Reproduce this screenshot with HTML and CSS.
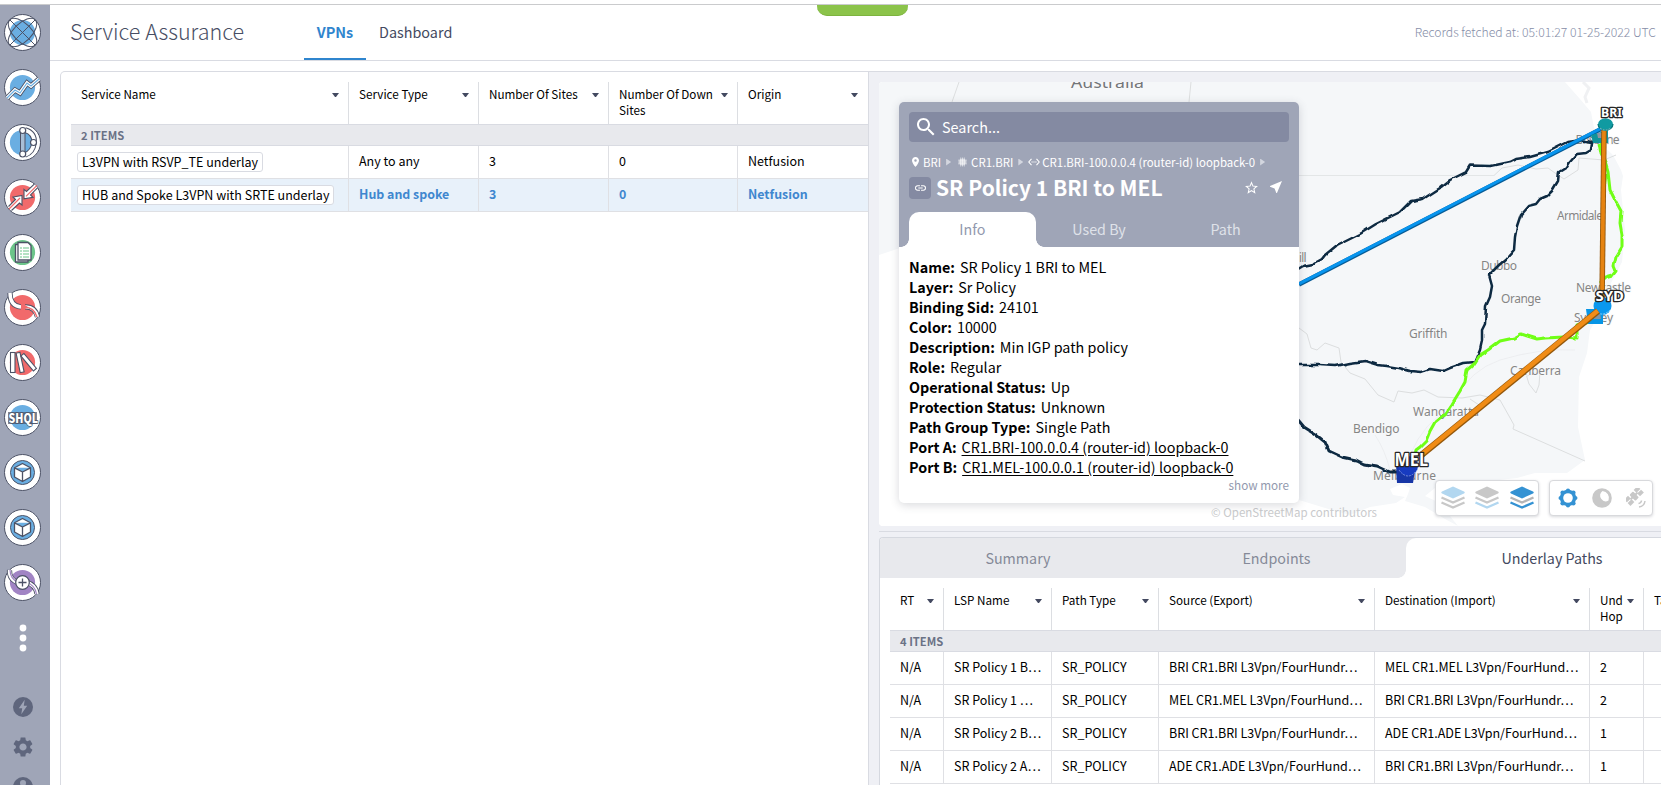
FILE: index.html
```html
<!DOCTYPE html>
<html lang="en">
<head>
<meta charset="utf-8">
<title>Service Assurance</title>
<link rel="stylesheet" href="styles.css">
</head>
<body>
<div class="app">
  <nav class="sidebar">
    <svg class="app-icon" viewBox="0 0 37 37"><circle class="disc" cx="18.5" cy="18.5" r="18"/><circle cx="18.5" cy="18.5" r="12.6" fill="#6aaee2"/><g class="ln"><ellipse cx="18.5" cy="18.5" rx="18" ry="9" transform="rotate(45 18.5 18.5)"/><ellipse cx="18.5" cy="18.5" rx="18" ry="9" transform="rotate(-45 18.5 18.5)"/><path d="M6 6L31 31M31 6L6 31"/></g></svg>
    <svg class="app-icon" viewBox="0 0 37 37"><circle class="disc" cx="18.5" cy="18.5" r="18"/><circle cx="18.5" cy="18.5" r="12.6" fill="#6aaee2"/><path class="tube-o" d="M3 29L11 21 16 24 23 14 27 17 35 10"/><path class="tube-w" d="M3 29L11 21 16 24 23 14 27 17 35 10"/><path d="M3 29L11 21 16 24 23 14 27 17 35 10" fill="none" stroke="#6aaee2" stroke-width="1.2"/></svg>
    <svg class="app-icon" viewBox="0 0 37 37"><circle class="disc" cx="18.5" cy="18.5" r="18"/><circle cx="18.5" cy="18.5" r="12.6" fill="#6aaee2"/><path d="M21 6Q31 9 30 19 29 28 21 31" fill="none" stroke="#4c5266" stroke-width="5.5"/><path d="M21 6Q31 9 30 19 29 28 21 31" fill="none" stroke="#fff" stroke-width="3.5"/><rect x="16.5" y="8" width="4.5" height="21" fill="#a9bfd6" stroke="#4c5266"/><g fill="#fff" stroke="#4c5266" stroke-width="1.2"><circle cx="18.7" cy="6.5" r="3"/><circle cx="29.5" cy="18.5" r="3"/><circle cx="18.7" cy="30" r="3"/></g></svg>
    <svg class="app-icon" viewBox="0 0 37 37"><circle class="disc" cx="18.5" cy="18.5" r="18"/><circle cx="18.5" cy="18.5" r="12.6" fill="#f16a6b"/><g id="arr"><path d="M4.5 27.5L11.5 20.5 9 18 18 16.5V26L15.5 24 7.5 31.5" fill="#fff" stroke="#4c5266" stroke-width="1.1"/><path d="M5 30L16 19" stroke="#f16a6b" stroke-width="1.3"/></g><use href="#arr" transform="rotate(180 19 18.2)"/></svg>
    <svg class="app-icon" viewBox="0 0 37 37"><circle class="disc" cx="18.5" cy="18.5" r="18"/><circle cx="18.5" cy="18.5" r="12.6" fill="#6cc58a"/><path d="M11.5 10.5H24V28H11.5Z" fill="#fff" stroke="#4c5266" stroke-width="1.3"/><path d="M14 8.5H24L27 11.5V26H14Z" fill="#fff" stroke="#4c5266" stroke-width="1.3"/><path d="M16 14h2m1 0h6M16 17h2m1 0h6M16 20h2m1 0h6M16 23h2m1 0h6" stroke="#6cc58a" stroke-width="1.2"/></svg>
    <svg class="app-icon" viewBox="0 0 37 37"><circle class="disc" cx="18.5" cy="18.5" r="18"/><circle cx="18.5" cy="18.5" r="12.6" fill="#f16a6b"/><path d="M6 4Q6 17 17 18" class="tube-o"/><path d="M6 4Q6 17 17 18" class="tube-w"/><path d="M20 18Q31 17 33.5 28" class="tube-o"/><path d="M20 18Q31 17 33.5 28" class="tube-w"/><path d="M20 18.3Q30 18 33 28" fill="none" stroke="#f16a6b" stroke-width="1.4"/><path d="M17 13l2 2 2-2v3l3 2-3 2v3l-2-2-2 1z" fill="#f16a6b"/></svg>
    <svg class="app-icon" viewBox="0 0 37 37"><circle class="disc" cx="18.5" cy="18.5" r="18"/><circle cx="18.5" cy="18.5" r="12.6" fill="#f16a6b"/><g fill="#fff" stroke="#4c5266" stroke-width="1.1"><rect x="6.5" y="8.5" width="4.5" height="20"/><rect x="14" y="8.5" width="4" height="20" transform="rotate(-12 16 18)"/><rect x="22.5" y="8.5" width="4" height="19.5" transform="rotate(-40 24.5 18)"/></g></svg>
    <svg class="app-icon" viewBox="0 0 37 37"><circle class="disc" cx="18.5" cy="18.5" r="18"/><circle cx="18.5" cy="18.5" r="12.6" fill="#6aaee2"/><path d="M4 13H33V25H4Z" fill="#4c5266" opacity=".7"/><text class="shql" x="4.5" y="23.5" textLength="29.5" lengthAdjust="spacingAndGlyphs">SHQL</text></svg>
    <svg class="app-icon" viewBox="0 0 37 37"><g id="cube"><circle class="disc" cx="18.5" cy="18.5" r="18"/><circle cx="18.5" cy="18.5" r="12" fill="#6aaee2" stroke="#4c5266"/><path d="M18.5 9.5L26.5 13.8V23L18.5 27.5 10.5 23V13.8ZM10.5 13.8L18.5 18 26.5 13.8M18.5 18V27.5" fill="#fff" stroke="#4c5266" stroke-width="1.3" stroke-linejoin="round"/></g></svg>
    <svg class="app-icon" viewBox="0 0 37 37"><use href="#cube"/></svg>
    <svg class="app-icon" viewBox="0 0 37 37"><circle class="disc" cx="18.5" cy="18.5" r="18"/><circle cx="18.5" cy="18.5" r="12.6" fill="#a184c4"/><path class="tube-o" d="M5.5 6Q5 16 15 19M22 18Q32 21 33 30"/><path class="tube-w" d="M5.5 6Q5 16 15 19M22 18Q32 21 33 30"/><path d="M6 6Q6 15 15 19M22 18Q31 21 32.5 30" fill="none" stroke="#a184c4" stroke-width="1.2"/><circle cx="18.5" cy="18.5" r="6.8" fill="#fff" stroke="#4c5266" stroke-width="1.2"/><path d="M18.5 14.5V22.5M14.5 18.5H22.5" stroke="#4c5266" stroke-width="1.3"/></svg>
    <svg class="dots" viewBox="0 0 8 28"><circle cx="4" cy="4" r="3.4"/><circle cx="4" cy="14" r="3.4"/><circle cx="4" cy="24" r="3.4"/></svg>
    <svg class="tool first" viewBox="0 0 20 20"><circle cx="10" cy="10" r="10"/><path d="M11.7 2.8L5.8 11.2H9.2L8.3 17.2 14.2 8.8H10.8Z" fill="#9fa5b7"/></svg>
    <svg class="tool" viewBox="2 2 20 20"><path d="M19.140 12.940c.04-.3.06-.61.06-.94 0-.32-.02-.64-.07-.94l2.030-1.580c.18-.14.23-.41.120-.61l-1.920-3.320c-.12-.22-.37-.29-.59-.22l-2.390.96c-.5-.38-1.030-.7-1.620-.94l-.36-2.540c-.04-.24-.24-.41-.48-.41h-3.840c-.24 0-.43.17-.47.41l-.36 2.540c-.59.24-1.130.57-1.620.94l-2.390-.96c-.22-.08-.47 0-.59.22L2.740 8.870c-.12.21-.08.47.12.61l2.030 1.580c-.05.3-.09.63-.09.94s.02.64.07.94l-2.030 1.580c-.18.14-.23.41-.12.61l1.920 3.320c.12.22.37.29.59.22l2.390-.96c.5.38 1.030.7 1.620.94l.36 2.540c.05.24.24.41.48.41h3.840c.24 0 .44-.17.47-.41l.36-2.540c.59-.24 1.130-.56 1.620-.94l2.390.96c.22.080.47 0 .59-.22l1.920-3.320c.12-.22.07-.47-.12-.61l-2.010-1.580zM12 15.600c-1.980 0-3.600-1.620-3.600-3.600s1.620-3.600 3.600-3.600 3.600 1.620 3.600 3.600-1.620 3.600-3.600 3.600z"/></svg>
    <svg class="tool" viewBox="0 0 20 20"><circle cx="10" cy="10" r="10"/><circle cx="10" cy="6" r="3" fill="#9fa5b7"/></svg>
  </nav>

  <div class="content">
    <header class="topbar">
      <h1 class="page-title">Service Assurance</h1>
      <div class="top-tabs"><a class="top-tab active">VPNs</a><a class="top-tab">Dashboard</a></div>
      <span class="fetched">Records fetched at: 05:01:27 01-25-2022 UTC</span>
      <div class="status-pill"></div>
    </header>

    <main class="workspace">
      <section class="services">
        <div class="grid services-grid">
          <div class="hrow">
            <div class="hcell"><span>Service Name</span><i class="caret"></i></div>
            <div class="hcell"><span>Service Type</span><i class="caret"></i></div>
            <div class="hcell"><span>Number Of Sites</span><i class="caret"></i></div>
            <div class="hcell"><span>Number Of Down<br>Sites</span><i class="caret"></i></div>
            <div class="hcell"><span>Origin</span><i class="caret"></i></div>
          </div>
          <div class="count">2 ITEMS</div>
          <div class="row"><div class="cell chip-cell"><span class="chip">L3VPN with RSVP_TE underlay</span></div><div class="cell">Any to any</div><div class="cell">3</div><div class="cell">0</div><div class="cell">Netfusion</div></div>
          <div class="row selected"><div class="cell chip-cell"><span class="chip">HUB and Spoke L3VPN with SRTE underlay</span></div><div class="cell">Hub and spoke</div><div class="cell">3</div><div class="cell">0</div><div class="cell">Netfusion</div></div>
        </div>
      </section>

      <section class="detail">
        <div class="map">
          <svg class="map-canvas" viewBox="879 82 782 444">
            <defs><filter id="rough" x="-5%" y="-5%" width="110%" height="110%"><feTurbulence type="fractalNoise" baseFrequency="0.1" numOctaves="1" seed="4"/><feDisplacementMap in="SourceGraphic" scale="4" xChannelSelector="R" yChannelSelector="G"/></filter></defs>
            <rect x="879" y="82" width="782" height="444" fill="#fff"/>
            <path d="M879 82H1565L1580 99 1591 112 1594 128 1601 144 1613 155 1621 170 1623 176 1621 190 1625 230 1622 262 1610 285 1605 305 1590 330 1587 353 1579 377 1578 427 1585 460 1567 473 1535 473 1517 478 1490 481 1440 484 1425 496 1440 503 1450 516 1458 526 1445 519 1425 507 1405 501 1408 494 1410 488 1402 484 1390 489 1393 495 1405 497 1396 503 1370 507 1350 515 1335 511 1299 500 1200 420 900 248 879 255Z" fill="#f5f7f9"/>
            <path d="M1583 82L1589 88 1585 97 1587 103" fill="none" stroke="#f0f1f3" stroke-width="3"/>
            <g fill="none" stroke="#dcdedf" stroke-width="1">
              <path d="M959 82L952 102M1191 82L1189 102"/>
              <path d="M1299 175.5H1494" opacity=".7"/>
              <path d="M1494 175.5L1502 168 1518 165 1536 169 1548 168 1555 173 1564 179 1578 170 1579 158 1604 160 1616 155"/>
              <path d="M1299 328L1307 334 1311 348 1317 350 1325 343 1339 348 1341 362 1350 373 1365 379 1378 395 1394 402 1398 391 1412 393 1424 390 1438 397 1462 398 1480 395 1500 400 1509 416 1514 425 1513 429 1585 461"/>
              <path d="M1527 376L1540 372 1539 385 1536 393 1529 384 1526 374M1470 399L1479 405 1491 397"/>
              <path d="M1455 400Q1470 370 1500 360 1540 348 1575 350M1410 455Q1425 420 1450 410M1375 435Q1385 450 1390 470" opacity=".35"/>
            </g>
            <g class="place">
              <text class="region" x="1071" y="87.5" textLength="73" lengthAdjust="spacingAndGlyphs">Australia</text>
              <text x="1575.5" y="143.5" textLength="44">Brisbane</text>
              <text x="1557" y="220" textLength="46">Armidale</text>
              <text x="1481" y="270" textLength="36">Dubbo</text>
              <text x="1299" y="261.5" textLength="7.5">ill</text>
              <text x="1576" y="291.5" textLength="55">Newcastle</text>
              <text x="1501" y="303" textLength="40">Orange</text>
              <text x="1574" y="322" textLength="39">Sydney</text>
              <text x="1409" y="337.5" textLength="38.5">Griffith</text>
              <text x="1510" y="374.5" textLength="51">Canberra</text>
              <text x="1413" y="416" textLength="66">Wangaratta</text>
              <text x="1353" y="433" textLength="46.5">Bendigo</text>
              <text x="1373" y="480" textLength="63">Melbourne</text>
            </g>
            <g filter="url(#rough)" fill="none" stroke-linejoin="round">
              <g stroke="#0e2a42" stroke-width="2.5">
                <path d="M1290 274L1303 266 1313 264 1322 259 1325 255 1336 246 1350 239 1360 234 1376 224 1400 212 1411 201 1423 199 1440 188 1450 180 1466 172 1470 165.5 1491 166 1510 162 1516 159 1530 157 1548 152 1562 145 1568 142 1581 140"/>
                <path d="M1580 140L1592 142 1591 150 1586 153 1577 154 1570 162 1567 167 1559 172 1558 181 1552 191 1547 196 1540 199 1536 204 1528 206 1521 214 1517 226 1515 237 1514 250 1506 259 1498 266 1489 275 1492 286 1490 297 1486 306 1485 324 1482 330 1482 341 1480 350 1475 362 1464 363 1450 368 1443 371 1430 369 1421 372 1410 371 1399 368 1387 366 1378 365 1365 361 1350 363 1336 366 1320 365 1290 365"/>
                <path d="M1292 413L1299 421 1304 427 1315 434 1325 442 1329 451 1342 457 1356 460 1364 464 1377 466 1390 472 1401 472" stroke-width="3"/>
              </g>
              <g stroke="#70ff16" stroke-width="3">
                <path d="M1599 143L1601 154 1605 162 1608 172 1610 190 1615 200 1621 211 1620 223 1622 235 1622 247 1616 257 1614 266 1616 271 1612 276 1605 278 1600 283"/>
                <path d="M1589 321L1577 325 1577 338 1564 337 1545 338 1537 339 1521 334 1514 338 1500 341 1488 350 1480 355 1474 364 1467 370 1465 382 1460 391 1452 404 1446 413 1435 422 1430 431 1426 441 1420 447 1416 450 1415 455"/>
              </g>
            </g>
            <path d="M1299 284.5L1601 129" stroke="#075c96" stroke-width="4.3"/>
            <path d="M1299 283.8L1601 128.3" stroke="#0795ef" stroke-width="3"/>
            <path d="M1591 135L1608 130V143H1593Z" fill="#10939b"/><path d="M1597 133H1603V138H1598Z" fill="#8d94a3"/>
            <path d="M1604 130L1602 303" stroke="#93570b" stroke-width="5.5"/><path d="M1604 130L1602 303" stroke="#e68310" stroke-width="3.7"/>
            <ellipse cx="1605.5" cy="124.5" rx="7.5" ry="6.2" fill="#109aa1"/><path d="M1598 124A7.5 6.2 0 0 0 1613 124" fill="none" stroke="#07767c" stroke-width="1.2"/><path d="M1600 128Q1605 132 1611 128" fill="none" stroke="#d5eeee" stroke-width=".6" stroke-dasharray="2 1"/>
            <path d="M1586 309H1603V324H1588Z" fill="#0795e5"/><path d="M1594 314L1600 312 1601 319H1594Z" fill="#7f95a4"/>
            <circle cx="1602.5" cy="306" r="9" fill="#0a98ef"/><path d="M1595 311Q1603 318 1611 309" fill="none" stroke="#b9e2fa" stroke-width=".7" stroke-dasharray="2 1"/>
            <path d="M1598 311L1419 457" stroke="#93570b" stroke-width="6.5"/><path d="M1597.7 310.7L1418.7 456.7" stroke="#f08c16" stroke-width="4.6"/>
            <path d="M1396 464H1416L1413 483H1397Z" fill="#1736a6"/><circle cx="1408" cy="466" r="10" fill="#173bc0"/><path d="M1399 470Q1408 482 1417 470" fill="none" stroke="#9baeea" stroke-width=".7" stroke-dasharray="2 1"/>
            <g class="site"><text x="1601" y="116.5" font-size="12" textLength="21" lengthAdjust="spacingAndGlyphs">BRI</text><text x="1595.5" y="301" font-size="14" textLength="28.5" lengthAdjust="spacingAndGlyphs">SYD</text><text x="1394.5" y="465.5" font-size="17.2" textLength="33.5" lengthAdjust="spacingAndGlyphs">MEL</text></g>
          </svg>
          <div class="osm">© OpenStreetMap contributors</div>

          <div class="info-card">
            <div class="card-head">
              <div class="search"><svg viewBox="3 3 18 18"><path d="M15.500 14h-.79l-.28-.27C15.410 12.590 16 11.110 16 9.500 16 5.910 13.090 3 9.500 3S3 5.910 3 9.500 5.910 16 9.500 16c1.610 0 3.090-.59 4.230-1.570l.27.28v.79l5 4.990L20.490 19l-4.990-5zm-6 0C7.010 14 5 11.990 5 9.500S7.010 5 9.500 5 14 7.010 14 9.500 11.990 14 9.500 14z"/></svg><span>Search...</span></div>
              <div class="crumbs">
                <svg class="pin" viewBox="5 2 14 20"><path d="M12 2C8.1 2 5 5.1 5 9c0 5.2 7 13 7 13s7-7.8 7-13c0-3.9-3.1-7-7-7zm0 9.5a2.5 2.5 0 1 1 0-5 2.5 2.5 0 0 1 0 5z"/></svg><span>BRI</span><i class="tri"></i>
                <svg class="chipset" viewBox="0 0 10 10"><path d="M0 3h10M0 5h10M0 7h10M3 0v10M5 0v10M7 0v10" fill="none" stroke="#fff" stroke-width=".8" opacity=".75"/><circle cx="5" cy="5" r="3.8" fill="#fff" opacity=".45"/></svg><span>CR1.BRI</span><i class="tri"></i>
                <svg class="ports" viewBox="0 0 12 8"><path d="M3.5.8L.8 4l2.7 3.2M8.5.8L11.2 4 8.5 7.2M3.5 4h1.2M5.4 4h1.2M7.3 4h1.2" fill="none" stroke="#fff" stroke-width="1.1"/></svg><span class="port-name">CR1.BRI-100.0.0.4 (router-id) loopback-0</span><i class="tri"></i>
              </div>
              <div class="title-row">
                <span class="link-badge"><svg viewBox="2 7 20 10"><path d="M3.900 12c0-1.710 1.390-3.100 3.100-3.100h4V7H7a5 5 0 0 0 0 10h4v-1.900H7c-1.710 0-3.100-1.390-3.100-3.100zM8 13h8v-2H8v2zm9-6h-4v1.900h4a3.100 3.100 0 0 1 0 6.200h-4V17h4a5 5 0 0 0 0-10z"/></svg></span>
                <h2>SR Policy 1 BRI to MEL</h2>
                <svg class="star" viewBox="2 2 20 19"><path d="M22 9.240l-7.190-.62L12 2 9.190 8.630 2 9.240l5.460 4.730L5.820 21 12 17.270 18.180 21l-1.630-7.030L22 9.240zM12 15.400l-3.760 2.270 1-4.280-3.320-2.880 4.380-.38L12 6.100l1.710 4.040 4.380.38-3.320 2.880 1 4.280L12 15.400z"/></svg>
                <svg class="nav-arrow" viewBox="3 3 18 18"><path d="M21 3L3 10.530v.98l6.840 2.650L12.480 21h.98L21 3z"/></svg>
              </div>
              <div class="card-tabs"><div class="card-tab active">Info</div><div class="card-tab">Used By</div><div class="card-tab">Path</div></div>
            </div>
            <div class="card-body">
              <div><b>Name:</b>SR Policy 1 BRI to MEL</div>
              <div><b>Layer:</b>Sr Policy</div>
              <div><b>Binding Sid:</b>24101</div>
              <div><b>Color:</b>10000</div>
              <div><b>Description:</b>Min IGP path policy</div>
              <div><b>Role:</b>Regular</div>
              <div><b>Operational Status:</b>Up</div>
              <div><b>Protection Status:</b>Unknown</div>
              <div><b>Path Group Type:</b>Single Path</div>
              <div><b>Port A:</b><u>CR1.BRI-100.0.0.4 (router-id) loopback-0</u></div>
              <div><b>Port B:</b><u>CR1.MEL-100.0.0.1 (router-id) loopback-0</u></div>
              <div class="more">show more</div>
            </div>
          </div>

          <div class="map-tools">
            <div class="tool-group">
              <svg viewBox="0 0 24 24"><path d="M12 .5L23 5.5Q24.5 6.5 23 7.5L12 12.5 1 7.5Q-.5 6.5 1 5.5Z" fill="#b2d7f0"/><path class="lay g" d="M.5 11.5L12 16.5 23.5 11.5"/><path class="lay g" d="M.5 16.5L12 21.5 23.5 16.5"/></svg>
              <svg viewBox="0 0 24 24"><path d="M12 .5L23 5.5Q24.5 6.5 23 7.5L12 12.5 1 7.5Q-.5 6.5 1 5.5Z" fill="#c8c8c8"/><path class="lay g" d="M.5 11.5L12 16.5 23.5 11.5"/><path class="lay lb" d="M.5 16.5L12 21.5 23.5 16.5"/></svg>
              <svg viewBox="0 0 24 24"><path d="M12 .5L23 5.5Q24.5 6.5 23 7.5L12 12.5 1 7.5Q-.5 6.5 1 5.5Z" fill="#3492d3"/><path class="lay dg" d="M.5 11.5L12 16.5 23.5 11.5"/><path class="lay bl" d="M.5 16.5L12 21.5 23.5 16.5"/></svg>
            </div>
            <div class="tool-group modes">
              <svg viewBox="0 0 20 20"><g fill="#3492d3"><circle cx="10" cy="10" r="8.2"/><circle cx="10" cy="2.6" r="2.1"/><circle cx="10" cy="17.4" r="2.1"/><circle cx="2.6" cy="10" r="2.1"/><circle cx="17.4" cy="10" r="2.1"/><circle cx="4.7" cy="4.7" r="2.3"/><circle cx="15.3" cy="4.7" r="2.3"/><circle cx="4.7" cy="15.3" r="2.3"/><circle cx="15.3" cy="15.3" r="2.3"/></g><circle cx="10" cy="10" r="4.8" fill="#fff"/></svg>
              <svg viewBox="0 0 20 20"><circle cx="10" cy="10" r="9.8" fill="#c8c8c8"/><path d="M10.5 3A7 7 0 0 1 16.5 12.5 5.6 5.6 0 0 1 9.200 10.800 6 6 0 0 1 10.5 3Z" fill="#fff"/></svg>
              <svg viewBox="0 0 20 20" fill="#c8c8c8"><g transform="rotate(-45 8 8)"><rect x="5.5" y="4" width="5" height="8.5" rx="1"/><rect x="-1.5" y="3.5" width="5.5" height="4"/><rect x="-1.5" y="8.5" width="5.5" height="4"/><rect x="12" y="3.5" width="5.5" height="4"/><rect x="12" y="8.5" width="5.5" height="4"/><rect x="3" y="7" width="10" height="2"/></g><path d="M12.5 15.5A3.5 3.5 0 0 0 15.5 12.5M13 19A7 7 0 0 0 19 13" fill="none" stroke="#c8c8c8" stroke-width="1.5"/></svg>
            </div>
          </div>
        </div>
        <div class="splitter"></div>
        <div class="paths">
          <div class="path-tabs"><div class="path-tab">Summary</div><div class="path-tab">Endpoints</div><div class="path-tab active">Underlay Paths</div></div>
          <div class="grid paths-grid">
            <div class="hrow">
              <div class="hcell"><span>RT</span><i class="caret"></i></div><div class="hcell"><span>LSP Name</span><i class="caret"></i></div><div class="hcell"><span>Path Type</span><i class="caret"></i></div><div class="hcell"><span>Source (Export)</span><i class="caret"></i></div><div class="hcell"><span>Destination (Import)</span><i class="caret"></i></div><div class="hcell"><span>Und<br>Hop</span><i class="caret"></i></div><div class="hcell"><span>Ta</span></div>
            </div>
            <div class="count">4 ITEMS</div>
            <div class="row"><div class="cell">N/A</div><div class="cell">SR Policy 1 B…</div><div class="cell">SR_POLICY</div><div class="cell">BRI CR1.BRI L3Vpn/FourHundr…</div><div class="cell">MEL CR1.MEL L3Vpn/FourHund…</div><div class="cell">2</div><div class="cell"></div></div>
            <div class="row"><div class="cell">N/A</div><div class="cell">SR Policy 1 …</div><div class="cell">SR_POLICY</div><div class="cell">MEL CR1.MEL L3Vpn/FourHund…</div><div class="cell">BRI CR1.BRI L3Vpn/FourHundr…</div><div class="cell">2</div><div class="cell"></div></div>
            <div class="row"><div class="cell">N/A</div><div class="cell">SR Policy 2 B…</div><div class="cell">SR_POLICY</div><div class="cell">BRI CR1.BRI L3Vpn/FourHundr…</div><div class="cell">ADE CR1.ADE L3Vpn/FourHund…</div><div class="cell">1</div><div class="cell"></div></div>
            <div class="row"><div class="cell">N/A</div><div class="cell">SR Policy 2 A…</div><div class="cell">SR_POLICY</div><div class="cell">ADE CR1.ADE L3Vpn/FourHund…</div><div class="cell">BRI CR1.BRI L3Vpn/FourHundr…</div><div class="cell">1</div><div class="cell"></div></div>
          </div>
        </div>
      </section>
    </main>
  </div>
</div>
</body>
</html>
```

FILE: styles.css
```css
* { box-sizing: border-box; }
body {
  margin: 0;
  height: 785px;
  overflow: hidden;
  background: #fff;
  color: #000;
  font: 12.5px/16px "Noto Sans CJK SC", "Noto Sans", sans-serif;
}
h1, h2 { margin: 0; }
.app { display: flex; height: 781px; margin-top: 4px; border-top: 1px solid #cacbcd; overflow: hidden; }

/* Sidebar */
.sidebar { flex: none; width: 50px; padding: 9px 0 0 4px; background: #9fa5b7; display: flex; flex-direction: column; }
.app-icon { flex: none; width: 37px; height: 37px; margin-bottom: 18px; overflow: visible; }
.disc { fill: #fff; stroke: #4c5266; stroke-width: 1; }
.ln { fill: none; stroke: #4c5266; stroke-width: 1; }
.tube-o { fill: none; stroke: #4c5266; stroke-width: 5.2; }
.tube-w { fill: none; stroke: #fff; stroke-width: 3.4; }
.shql { font: 900 13px "Noto Sans CJK SC", sans-serif; fill: #fff; stroke: #4c5266; stroke-width: 1.4; paint-order: stroke; }
.dots { flex: none; width: 8px; height: 28px; margin: 5px 0 0 14.5px; fill: #fff; }
.tool { flex: none; width: 20px; height: 20px; margin: 0 0 20px 8.5px; fill: #5f667d; }
.tool.first { margin-top: 45px; }

/* Top bar */
.content { flex: 1; min-width: 0; display: flex; flex-direction: column; }
.topbar { position: relative; flex: none; height: 56px; padding: 0 5px 0 20px; border-bottom: 1px solid #d9dbe2; display: flex; align-items: stretch; }
.page-title { width: 234px; font-size: 21.5px; font-weight: 300; line-height: 52px; color: #484e64; }
.top-tabs { display: flex; }
.top-tab { padding: 0 13px; line-height: 53px; font-size: 14.4px; color: #434960; }
.top-tab.active { width: 62px; padding: 0; text-align: center; font-weight: 700; color: #2f85ce; border-bottom: 2px solid #2f85ce; }
.fetched { margin-left: auto; line-height: 54px; font-size: 12.2px; font-weight: 300; color: #858da7; }
.status-pill { position: absolute; left: 767px; top: 0; width: 91px; height: 11px; background: #8bc34a; border-bottom: 1px solid #7db33f; border-radius: 0 0 10px 10px; }

/* Workspace */
.workspace { flex: 1; min-height: 0; display: flex; padding: 10px 0 0 10px; }
.services { flex: none; width: 809px; border: 1px solid #d9dbe2; border-bottom: 0; border-radius: 5px 0 0 0; padding: 10px 0 0 10px; }
.detail { flex: 1; min-width: 0; padding: 10px 0 0 10px; background: #eff0f5; border-top: 1px solid #d9dbe2; display: flex; flex-direction: column; }

/* Data grids */
.hrow, .row { display: grid; }
.services-grid .hrow, .services-grid .row { grid-template-columns: 278px 130px 130px 129px 130px; }
.paths-grid .hrow, .paths-grid .row { grid-template-columns: 54px 108px 107px 216px 215px 54px 30px; }
.hrow { height: 42px; }
.hcell { display: flex; justify-content: space-between; padding: 4px 9px 0 10px; border-right: 1px solid #dcdee2; font-size: 11.7px; white-space: nowrap; }
.hcell:last-child, .cell:last-child { border-right-color: transparent; }
.caret { flex: none; margin-top: 7px; width: 7px; height: 4px; background: #434960; clip-path: polygon(0 0, 100% 0, 57% 100%, 43% 100%); }
.count { height: 22px; padding-left: 10px; border: solid #d9dbe2; border-width: 1px 0; background: #e8e9ed; line-height: 20px; font-size: 11.2px; font-weight: 700; color: #6b7286; }
.row { height: 33px; border-bottom: 1px solid #dfe0e4; }
.cell { padding-left: 10px; border-right: 1px solid #dfe0e4; line-height: 30px; white-space: nowrap; overflow: hidden; }
.row.selected { background: #e8f1fa; }
.selected .cell { color: #3f87cf; font-weight: 700; font-size: 12.4px; }
.chip-cell { padding: 6px 0 0 6px; display: flex; align-items: flex-start; }
.chip { height: 20px; padding: 0 4px; border: 1px solid #d9dbe2; border-radius: 3px; background: #fff; line-height: 18px; color: #000; font-size: 12.5px; font-weight: 400; }

/* Map */
.map { position: relative; flex: none; height: 444px; border-radius: 4px 0 0 4px; overflow: hidden; background: #fff; }
.map-canvas { display: block; width: 782px; height: 444px; }
.place { font: 12px "Noto Sans", sans-serif; fill: #858585; stroke: #f8f9fa; stroke-width: 1.5; paint-order: stroke; }
.place .region { font-size: 17px; fill: #747679; }
.site { font-family: "Noto Sans", sans-serif; font-weight: 700; fill: #fff; stroke: #252525; stroke-width: 2.6; paint-order: stroke; stroke-linejoin: round; }
.osm { position: absolute; left: 332px; bottom: 6px; font-size: 11.5px; letter-spacing: .02px; color: #c9cacc; }
.map-tools { position: absolute; left: 556px; top: 398px; display: flex; gap: 10px; }
.tool-group { display: flex; align-items: center; gap: 10.3px; width: 104px; height: 36px; padding: 0 5px; border: 1px solid #d8d9dc; border-radius: 4px; background: #fff; box-shadow: 0 1px 3px rgba(60, 65, 80, .2); }
.tool-group svg { flex: none; width: 24px; height: 24px; }
.tool-group.modes { gap: 14px; padding-left: 8px; }
.tool-group.modes svg { width: 20px; height: 20px; }
.lay { fill: none; stroke-width: 2.4; }
.g { stroke: #c8c8c8; }
.dg { stroke: #b4b5b7; }
.lb { stroke: #b2d7f0; }
.bl { stroke: #3492d3; }

/* Info card */
.info-card { position: absolute; left: 20px; top: 20px; width: 400px; height: 401px; border-radius: 5px; background: #fff; overflow: hidden; box-shadow: 0 2px 10px rgba(60, 65, 80, .2); }
.card-head { height: 145px; padding: 10px 10px 0; background: #9fa5b7; color: #fff; }
.search { height: 30px; padding-left: 8px; border-radius: 4px; background: #848aa2; display: flex; align-items: center; gap: 7px; font-size: 14.4px; }
.search svg { width: 18px; height: 18px; fill: #fff; }
.crumbs { display: flex; align-items: center; height: 20px; margin-top: 10px; padding-left: 3px; font-size: 11.43px; white-space: nowrap; }
.crumbs svg { flex: none; fill: #fff; }
.pin { width: 7px; height: 10px; margin-right: 4px; }
.tri { flex: none; width: 5px; height: 7px; margin: 0 7px 0 5px; background: #d3d6df; clip-path: polygon(0 0, 100% 50%, 0 100%); }
.chipset { width: 9px; height: 10px; margin-right: 4px; }
.tri + .ports { margin-left: -2px; }
.ports { width: 12px; height: 8px; margin-right: 2px; }
.title-row { display: flex; align-items: center; height: 30px; padding-right: 7px; }
.link-badge { flex: none; width: 22px; height: 22px; margin-top: 2px; border-radius: 4px; background: #848aa2; display: flex; align-items: center; justify-content: center; }
.link-badge svg { width: 11px; height: 6px; fill: #fff; }
.title-row h2 { margin: 0 auto 0 5px; font-size: 21px; line-height: 30px; font-weight: 700; }
.star { width: 13px; height: 13px; fill: #fff; margin-right: 12px; }
.nav-arrow { width: 12px; height: 12px; fill: #fff; }
.card-tabs { display: grid; grid-template-columns: repeat(3, 126.67px); height: 35px; margin-top: 10px; }
.card-tab { line-height: 34px; text-align: center; font-size: 14.3px; color: #dfe2e9; }
.card-tab.active, .path-tab.active { position: relative; background: #fff; border-radius: 10px 10px 0 0; }
.card-tab.active { color: #9299ae; }
.card-tab.active::before, .card-tab.active::after, .path-tab.active::before {
  content: ""; position: absolute; bottom: 0; width: 8px; height: 8px;
}
.card-tab.active::before, .path-tab.active::before { right: 100%; background: radial-gradient(circle at 0 0, transparent 7.5px, #fff 8px); }
.card-tab.active::after { left: 100%; background: radial-gradient(circle at 100% 0, transparent 7.5px, #fff 8px); }
.card-body { padding: 10px 10px 0; font-size: 14.33px; line-height: 20px; }
.card-body b { margin-right: 5px; }
.card-body u { text-underline-offset: 2px; }
.card-body .more { margin-top: -2px; text-align: right; font-size: 11.7px; color: #9299ae; }

/* Lower pane */
.splitter { flex: none; height: 11px; padding-top: 5px; }
.splitter::before { content: ""; display: block; height: 1px; background: #d9dbe2; }
.paths { flex: 1; min-height: 0; border: solid #d5d8df; border-width: 1px 0 0 1px; border-radius: 4px 0 0 0; background: #fff; overflow: hidden; }
.path-tabs { display: grid; grid-template-columns: 258px 259px 292px; height: 40px; padding-left: 9px; background: #e8e9ed; }
.path-tab { line-height: 40px; text-align: center; font-size: 14.3px; color: #858998; }
.path-tab.active { color: #434960; }
.paths-grid { margin: 10px 0 0 10px; }
```
